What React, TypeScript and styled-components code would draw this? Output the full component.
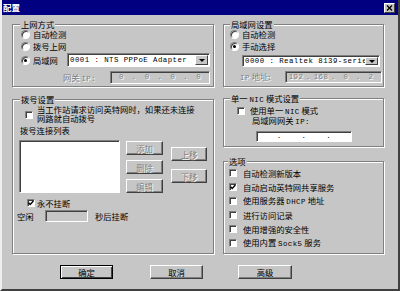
import React from 'react';
import styled, { createGlobalStyle } from 'styled-components';

const FACE = '#c6c6c6';

const GlobalStyle = createGlobalStyle`
  html, body { margin: 0; padding: 0; background: ${FACE}; }
  body {
    font-family: "Noto Sans CJK SC", "Liberation Sans", sans-serif;
    font-size: 8.3px;
    color: #000;
  }
  * { box-sizing: border-box; }
`;

const Window = styled.div`
  width: 400px;
  height: 291px;
  background: ${FACE};
  border: 2px solid;
  border-top: 0;
  border-color: ${FACE} #404040 #404040 #efefef;
  display: flex;
  flex-direction: column;
`;

const TitleBar = styled.div`
  height: 15px;
  background: #000080;
  color: #fff;
  font-weight: bold;
  font-size: 8.5px;
  line-height: 15px;
  display: flex;
  align-items: center;
  justify-content: space-between;
  padding: 0 3px 0 1px;
`;

const CloseBtn = styled.div`
  width: 11px;
  height: 10px;
  background: ${FACE};
  border: 1px solid;
  border-color: #fff #404040 #404040 #fff;
  display: flex;
  align-items: center;
  justify-content: center;
`;

const Body = styled.div`
  padding: 9px 0 0 10px;
  display: flex;
  flex-direction: column;
`;

const Columns = styled.div`
  display: flex;
  gap: 9px;
`;

const Column = styled.div<{ $w: number }>`
  width: ${p => p.$w}px;
  display: flex;
  flex-direction: column;
`;

const Group = styled.div<{ $h: number; $mt?: number }>`
  position: relative;
  height: ${p => p.$h}px;
  margin-top: ${p => p.$mt ?? 0}px;
  border: 1px solid #808080;
  box-shadow: inset 1px 1px 0 #fff, 1px 1px 0 #fff;
  display: flex;
  flex-direction: column;
`;

const Legend = styled.span<{ $left?: number }>`
  position: absolute;
  top: -5px;
  left: ${p => p.$left ?? 6}px;
  padding: 0 1px;
  background: ${FACE};
  line-height: 9px;
  white-space: nowrap;
`;

const Row = styled.div<{ $h: number; $mt?: number; $pl?: number; $pr?: number }>`
  height: ${p => p.$h}px;
  margin-top: ${p => p.$mt ?? 0}px;
  padding-left: ${p => p.$pl ?? 0}px;
  padding-right: ${p => p.$pr ?? 0}px;
  display: flex;
  align-items: center;
  white-space: nowrap;
  line-height: 10px;
`;

const Text = styled.span<{ $ml?: number; $w?: number; $off?: boolean }>`
  margin-left: ${p => p.$ml ?? 0}px;
  ${p => (p.$w ? `width: ${p.$w}px; flex: none;` : '')}
  color: ${p => (p.$off ? '#808080' : '#000')};
  ${p => (p.$off ? 'text-shadow: 1px 1px 0 #fff;' : '')}
`;

const mono = `
  font-family: "Liberation Mono", "Courier New", monospace;
  font-size: 7.4px;
  letter-spacing: 0.45px;
`;

const En = styled.span`
  ${mono}
`;

const Radio = styled.span<{ $on?: boolean }>`
  position: relative;
  flex: none;
  width: 9px;
  height: 9px;
  border-radius: 50%;
  background: #fff;
  border: 1px solid;
  border-color: #808080 #fff #fff #808080;
  box-shadow: inset 1px 1px 0 #404040;
  &::after {
    content: '';
    display: ${p => (p.$on ? 'block' : 'none')};
    position: absolute;
    left: 2px;
    top: 2px;
    width: 3px;
    height: 3px;
    border-radius: 50%;
    background: #000;
  }
`;

const Box = styled.span<{ $mt?: number }>`
  flex: none;
  width: 8px;
  height: 8px;
  margin-top: ${p => p.$mt ?? 0}px;
  background: #fff;
  border: 1px solid;
  border-color: #808080 #fff #fff #808080;
  box-shadow: inset 1px 1px 0 #404040;
  display: flex;
  align-items: center;
  justify-content: center;
`;

const Check: React.FC<{ on?: boolean; mt?: number }> = ({ on, mt }) => (
  <Box $mt={mt}>
    {on && (
      <svg width="6" height="6" viewBox="0 0 6 6">
        <path d="M0.6 2.8 L2.2 4.4 L5.4 1" stroke="#000" strokeWidth="1.4" fill="none" />
      </svg>
    )}
  </Box>
);

const Sunken = styled.div<{ $w: number; $h: number; $ml?: number; $mr?: number; $bg?: string }>`
  width: ${p => p.$w}px;
  height: ${p => p.$h}px;
  margin-left: ${p => (p.$ml === undefined ? 'auto' : `${p.$ml}px`)};
  margin-right: ${p => p.$mr ?? 0}px;
  flex: none;
  background: ${p => p.$bg ?? '#fff'};
  border: 1px solid;
  border-color: #808080 #fff #fff #808080;
  box-shadow: inset 1px 1px 0 #404040;
`;

const SelectBox = styled(Sunken)`
  display: flex;
  align-items: stretch;
  overflow: hidden;
`;

const SelectText = styled.div`
  flex: 1;
  min-width: 0;
  overflow: hidden;
  white-space: nowrap;
  padding: 0 0 0 2px;
  display: flex;
  align-items: center;
  ${mono}
`;

const Arrow = styled.div`
  width: 13px;
  flex: none;
  margin: 1px 1px 1px 0;
  background: ${FACE};
  border: 1px solid;
  border-color: #fff #404040 #404040 #fff;
  display: flex;
  align-items: center;
  justify-content: center;
  &::after {
    content: '';
    border-left: 3px solid transparent;
    border-right: 3px solid transparent;
    border-top: 3px solid #000;
  }
`;

const IpBox = styled(Sunken)`
  display: grid;
  grid-template-columns: 1fr auto 1fr auto 1fr auto 1fr;
  align-items: center;
  justify-items: center;
  line-height: 9px;
  ${mono}
`;

const IpPart = styled.span<{ $off?: boolean }>`
  color: ${p => (p.$off ? '#808080' : '#000')};
  ${p => (p.$off ? 'text-shadow: 1px 1px 0 #fff;' : '')}
`;

const ListArea = styled.div`
  margin-top: 5px;
  padding-left: 6px;
  display: flex;
  height: 53px;
`;

const BtnCol = styled.div<{ $ml: number; $pt: number; $gap: number }>`
  margin-left: ${p => p.$ml}px;
  padding-top: ${p => p.$pt}px;
  display: flex;
  flex-direction: column;
  gap: ${p => p.$gap}px;
`;

const Button = styled.div<{ $w: number; $off?: boolean; $default?: boolean }>`
  width: ${p => p.$w}px;
  height: 14px;
  flex: none;
  background: ${FACE};
  border: 1px solid;
  border-color: ${p => (p.$default ? '#000' : '#fff #404040 #404040 #fff')};
  box-shadow: ${p =>
    p.$default
      ? 'inset 1px 1px 0 #fff, inset -1px -1px 0 #404040'
      : 'inset -1px -1px 0 #808080'};
  display: flex;
  align-items: center;
  justify-content: center;
  line-height: 10px;
  color: ${p => (p.$off ? '#808080' : '#000')};
  ${p => (p.$off ? 'text-shadow: 1px 1px 0 #fff;' : '')}
`;

const Wrap = styled.div`
  margin-left: 4px;
  line-height: 8.5px;
  white-space: nowrap;
`;

const CheckRow = styled.div`
  padding: 5px 0 0 12px;
  display: flex;
  align-items: flex-start;
  height: 24px;
`;

const Spacer = styled.div<{ $h: number }>`
  height: ${p => p.$h}px;
  flex: none;
`;

const Footer = styled.div`
  margin: 11px 0 0 48px;
  display: flex;
  gap: 37px;
  & > :last-child { margin-left: -2px; }
`;

const IP: React.FC<{ parts: string[]; off?: boolean; w: number; h: number; ml?: number; mr?: number; bg?: string }> = ({
  parts,
  off,
  w,
  h,
  ml,
  mr,
  bg,
}) => (
  <IpBox $w={w} $h={h} $ml={ml} $mr={mr} $bg={bg}>
    {parts.map((v, i) => (
      <React.Fragment key={i}>
        {i > 0 && <IpPart $off={off}>.</IpPart>}
        <IpPart $off={off}>{v}</IpPart>
      </React.Fragment>
    ))}
  </IpBox>
);

const options: [React.ReactNode, boolean][] = [
  ['自动检测新版本', false],
  ['自动启动英特网共享服务', true],
  [<>使用服务器 <En>DHCP</En> 地址</>, false],
  ['进行访问记录', false],
  ['使用增强的安全性', false],
  [<>使用内置 <En>Sock5</En> 服务</>, false],
];

export default function App() {
  return (
    <Window>
      <GlobalStyle />
      <TitleBar>
        <span>配置</span>
        <CloseBtn>
          <svg width="7" height="6" viewBox="0 0 7 6">
            <path d="M1 0.5 L6 5.5 M6 0.5 L1 5.5" stroke="#000" strokeWidth="1.4" />
          </svg>
        </CloseBtn>
      </TitleBar>
      <Body>
        <Columns>
          <Column $w={202}>
            <Group $h={63}>
              <Legend $left={7}>上网方式</Legend>
              <Row $h={12} $mt={3} $pl={8}>
                <Radio />
                <Text $ml={3}>自动检测</Text>
              </Row>
              <Row $h={12} $pl={8}>
                <Radio />
                <Text $ml={3}>拨号上网</Text>
              </Row>
              <Row $h={14} $mt={1} $pl={8}>
                <Radio $on />
                <Text $ml={3}>局域网</Text>
                <SelectBox $w={143} $h={14} $mr={3}>
                  <SelectText>0001 : NTS PPPoE Adapter</SelectText>
                  <Arrow />
                </SelectBox>
              </Row>
              <Row $h={13} $mt={4} $pl={50}>
                <Text $off>网关 <En>IP:</En></Text>
                <IP parts={['0', '0', '0', '0']} off w={100} h={13} mr={3} bg={FACE} />
              </Row>
            </Group>

            <Group $h={155} $mt={12}>
              <Legend $left={7}>拨号设置</Legend>
              <CheckRow>
                <Check mt={6} />
                <Wrap>
                  当工作站请求访问英特网时，如果还未连接
                  <br />
                  网路就自动拨号
                </Wrap>
              </CheckRow>
              <Row $h={10} $mt={1} $pl={7}>
                <Text>拨号连接列表</Text>
              </Row>
              <ListArea>
                <Sunken $w={101} $h={53} $ml={0} />
                <BtnCol $ml={6} $pt={1} $gap={5}>
                  <Button $w={37} $off>添加</Button>
                  <Button $w={37} $off>删除</Button>
                  <Button $w={37} $off>编辑</Button>
                </BtnCol>
                <BtnCol $ml={8} $pt={7} $gap={8}>
                  <Button $w={36} $off>上移</Button>
                  <Button $w={36} $off>下移</Button>
                </BtnCol>
              </ListArea>
              <Row $h={11} $mt={4} $pl={14}>
                <Check on />
                <Text $ml={2}>永不挂断</Text>
              </Row>
              <Row $h={12} $mt={2} $pl={4}>
                <Text $w={28}>空闲</Text>
                <Sunken $w={43} $h={12} $ml={0} $bg={FACE} />
                <Text $ml={7}>秒后挂断</Text>
              </Row>
            </Group>
          </Column>

          <Column $w={161}>
            <Group $h={63}>
              <Legend>局域网设置</Legend>
              <Row $h={12} $mt={3} $pl={6}>
                <Radio />
                <Text $ml={3}>自动检测</Text>
              </Row>
              <Row $h={12} $pl={6}>
                <Radio $on />
                <Text $ml={3}>手动选择</Text>
              </Row>
              <Row $h={12} $mt={3} $pl={18}>
                <SelectBox $w={138} $h={12} $ml={0}>
                  <SelectText>0000 : Realtek 8139-series PC</SelectText>
                  <Arrow />
                </SelectBox>
              </Row>
              <Row $h={12} $mt={4} $pl={16}>
                <Text $off><En>IP</En> 地址:</Text>
                <IP parts={['192', '168', '0', '2']} off w={97} h={12} mr={1} bg={FACE} />
              </Row>
            </Group>

            <Group $h={49} $mt={11}>
              <Legend>单一 <En>NIC</En> 模式设置</Legend>
              <Row $h={11} $mt={6} $pl={13}>
                <Check />
                <Text $ml={5}>使用单一 <En>NIC</En> 模式</Text>
              </Row>
              <Row $h={10} $pl={28}>
                <Text>局域网网关 <En>IP:</En></Text>
              </Row>
              <Row $h={11} $mt={5} $pl={32}>
                <IP parts={['', '', '', '']} w={96} h={11} ml={0} />
              </Row>
            </Group>

            <Group $h={93} $mt={14}>
              <Legend $left={4}>选项</Legend>
              <Spacer $h={4} />
              {options.map(([label, on], i) => (
                <Row key={i} $h={14} $pl={5}>
                  <Check on={on} />
                  <Text $ml={6}>{label}</Text>
                </Row>
              ))}
            </Group>
          </Column>
        </Columns>

        <Footer>
          <Button $w={53} $default>确定</Button>
          <Button $w={53}>取消</Button>
          <Button $w={54}>高级</Button>
        </Footer>
      </Body>
    </Window>
  );
}
